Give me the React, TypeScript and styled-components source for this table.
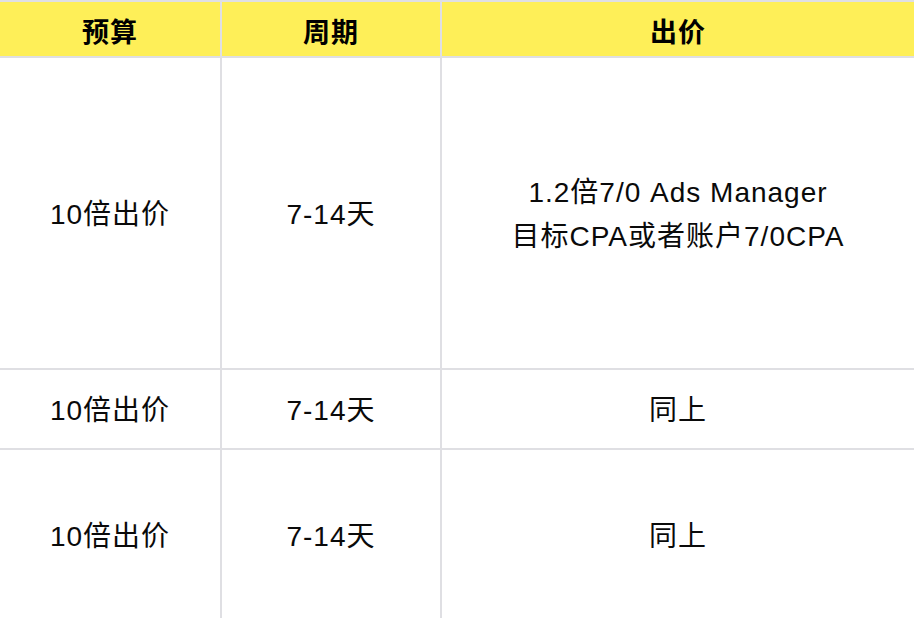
import React from 'react';
import styled, { createGlobalStyle } from 'styled-components';

const GlobalStyle = createGlobalStyle`
  html, body {
    margin: 0;
    padding: 0;
    background: #ffffff;
    overflow: hidden;
  }
  body {
    font-family: "Liberation Sans", "Noto Sans CJK SC", sans-serif;
  }
`;

const TableGrid = styled.div`
  display: grid;
  grid-template-columns: 220px 218px 1fr;
  grid-template-rows: 54px 310px 78px 170px;
  gap: 2px;
  padding-top: 2px;
  width: 914px;
  background: #dfdfe3;
`;

const HeaderCell = styled.div`
  display: flex;
  align-items: center;
  justify-content: center;
  padding-top: 2px;
  background: #feef58;
  color: #000000;
  font-family: "Noto Sans CJK SC", sans-serif;
  font-size: 27px;
  font-weight: 700;
  letter-spacing: 1px;
`;

const BodyCell = styled.div`
  display: flex;
  flex-direction: column;
  align-items: center;
  justify-content: center;
  padding-top: 4px;
  background: #ffffff;
  color: #0a0a0a;
  font-size: 28px;
  line-height: 44px;
  letter-spacing: 1px;
  text-align: center;
`;

const headers = ['预算', '周期', '出价'];

const rows: { budget: string; period: string; bid: string[] }[] = [
  {
    budget: '10倍出价',
    period: '7-14天',
    bid: ['1.2倍7/0 Ads Manager', '目标CPA或者账户7/0CPA'],
  },
  { budget: '10倍出价', period: '7-14天', bid: ['同上'] },
  { budget: '10倍出价', period: '7-14天', bid: ['同上'] },
];

export default function App() {
  return (
    <>
      <GlobalStyle />
      <TableGrid>
        {headers.map((h) => (
          <HeaderCell key={h}>{h}</HeaderCell>
        ))}
        {rows.map((row, i) => (
          <React.Fragment key={i}>
            <BodyCell>{row.budget}</BodyCell>
            <BodyCell>{row.period}</BodyCell>
            <BodyCell>
              {row.bid.map((line) => (
                <span key={line}>{line}</span>
              ))}
            </BodyCell>
          </React.Fragment>
        ))}
      </TableGrid>
    </>
  );
}
